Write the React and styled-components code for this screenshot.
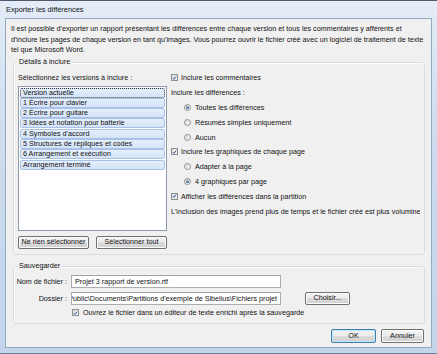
import React from "react";
import styled, { createGlobalStyle, css } from "styled-components";

const GlobalStyle = createGlobalStyle`
  html, body {
    margin: 0;
    padding: 0;
    background: #fff;
  }
  body {
    font-family: "Liberation Sans", Arial, sans-serif;
    font-size: 7.2px;
    color: #111;
  }
`;

const Frame = styled.div`
  width: 437px;
  height: 354px;
  box-sizing: border-box;
  display: flex;
  flex-direction: column;
  padding: 0 5px 5px 5px;
  background: linear-gradient(180deg, #e3ecf7 0%, #cddcee 40%, #c3d5eb 100%);
  border-top: 1px solid #4d5b6c;
  border-bottom: 1px solid #6d7f95;
`;

const TitleBar = styled.div`
  height: 17px;
  display: flex;
  align-items: center;
  padding-left: 1px;
  font-size: 7.4px;
  color: #111;
`;

const Client = styled.div`
  flex: 1;
  display: flex;
  flex-direction: column;
  background: #f0f0f0;
  border: 1px solid #93a8c2;
  box-sizing: border-box;
`;

const Intro = styled.p`
  margin: 0;
  padding: 5px 0 0 5px;
  line-height: 10.5px;
  white-space: nowrap;
`;

const Group = styled.div`
  position: relative;
  margin: ${({ $top }) => $top}px 6px 0 7px;
  height: ${({ $h }) => $h}px;
  box-sizing: border-box;
  border: 1px solid #d5dfe5;
  border-radius: 3px;
  box-shadow: inset 1px 1px 0 #fff;
  padding: ${({ $pad }) => $pad};
`;

const Legend = styled.span`
  position: absolute;
  top: -6px;
  left: 3px;
  padding: 0 2px;
  background: #f0f0f0;
  line-height: 10px;
`;

const Columns = styled.div`
  display: flex;
  gap: 4px;
  height: 100%;
`;

const LeftCol = styled.div`
  width: 149px;
  flex: none;
  display: flex;
  flex-direction: column;
  padding-top: 3px;
`;

const Caption = styled.div`
  line-height: 10px;
  height: 10px;
  margin-bottom: 3px;
`;

const ListBox = styled.div`
  height: 146px;
  box-sizing: border-box;
  background: #fff;
  border: 1px solid #8e9aa8;
  padding: 1px;
  display: flex;
  flex-direction: column;
  gap: 0.3px;
`;

const ListItem = styled.div`
  height: 10px;
  box-sizing: border-box;
  line-height: 8px;
  padding-left: 2px;
  border-radius: 2px;
  white-space: nowrap;
  background: linear-gradient(180deg, #e6effb 0%, #d3e3f7 100%);
  border: 1px solid #a7c2e6;
  ${({ $focus }) =>
    $focus &&
    css`
      border: 1px dotted #30343a;
    `}
`;

const ButtonRow = styled.div`
  display: flex;
  justify-content: space-between;
  margin-top: 5px;
`;

const Button = styled.button`
  font: inherit;
  color: #111;
  height: ${({ $h }) => $h || 13}px;
  width: ${({ $w }) => $w}px;
  margin-left: ${({ $ml }) => $ml || 0}px;
  padding: 0;
  flex: none;
  box-sizing: border-box;
  border: 1px solid ${({ $default }) => ($default ? "#3c7fb1" : "#707070")};
  border-radius: 2px;
  background: linear-gradient(180deg, #f3f3f3 0%, #ebebeb 49%, #dddddd 50%, #cfcfcf 100%);
  box-shadow: inset 0 0 0 1px ${({ $default }) => ($default ? "#c4e5f6" : "#fcfcfc")};
  line-height: 1;
`;

const RightCol = styled.div`
  flex: 1;
  min-width: 0;
  overflow: hidden;
  display: flex;
  flex-direction: column;
  padding-top: 1px;
`;

const Row = styled.div`
  height: 14.8px;
  display: flex;
  align-items: center;
  gap: ${({ $indent }) => ($indent ? 4 : 3)}px;
  padding-left: ${({ $indent }) => ($indent ? 13 : 0)}px;
  white-space: nowrap;
`;

const Box = styled.span`
  width: 7px;
  height: 7px;
  box-sizing: border-box;
  border: 1px solid #8e8f8f;
  background: linear-gradient(135deg, #dcdcdc 0%, #f6f6f6 100%);
  display: inline-flex;
  align-items: center;
  justify-content: center;
  flex: none;
`;

const Dot = styled(Box)`
  border-radius: 50%;
`;

const DotFill = styled.span`
  width: 3px;
  height: 3px;
  border-radius: 50%;
  background: radial-gradient(circle at 40% 35%, #8ab4dd 0%, #1d4f82 80%);
`;

const Check = () => (
  <Box>
    <svg width="6" height="6" viewBox="0 0 6 6">
      <path d="M1 3.2 L2.4 4.6 L5 1.2" fill="none" stroke="#2b4a86" strokeWidth="1.1" />
    </svg>
  </Box>
);

const Radio = ({ on }) => <Dot>{on && <DotFill />}</Dot>;

const FieldRow = styled.div`
  display: flex;
  align-items: center;
  height: ${({ $h }) => $h}px;
  margin-bottom: ${({ $mb }) => $mb || 0}px;
  white-space: nowrap;
`;

const FieldLabel = styled.span`
  width: 53px;
  text-align: right;
  margin-right: 4px;
  flex: none;
`;

const TextInput = styled.div`
  width: 210px;
  height: 13px;
  flex: none;
  box-sizing: border-box;
  background: #fff;
  border: 1px solid #abadb3;
  border-top-color: #a0a3aa;
  display: flex;
  align-items: center;
  justify-content: ${({ $end }) => ($end ? "flex-end" : "flex-start")};
  overflow: hidden;
  padding: 0 3px;
  white-space: nowrap;
`;

const CheckLine = styled.div`
  display: flex;
  align-items: center;
  gap: 4px;
  padding-left: 58px;
  height: 10px;
  white-space: nowrap;
`;

const Footer = styled.div`
  display: flex;
  justify-content: flex-end;
  gap: 5px;
  padding: 5px 7px 0 0;
`;

const versions = [
  "Version actuelle",
  "1 Écrire pour clavier",
  "2 Écrire pour guitare",
  "3 Idées et notation pour batterie",
  "4 Symboles d'accord",
  "5 Structures de répliques et codes",
  "6 Arrangement et exécution",
  "Arrangement terminé",
];

export default function App() {
  return (
    <>
      <GlobalStyle />
      <Frame>
        <TitleBar>Exporter les différences</TitleBar>
        <Client>
          <Intro>
            Il est possible d'exporter un rapport présentant les différences entre chaque version et tous les commentaires y afférents et
            <br />
            d'inclure les pages de chaque version en tant qu'images. Vous pourrez ouvrir le fichier créé avec un logiciel de traitement de texte
            <br />
            tel que Microsoft Word.
          </Intro>

          <Group $top={6} $h={193} $pad="7px 4px 5px 4px">
            <Legend>Détails à inclure</Legend>
            <Columns>
              <LeftCol>
                <Caption>Sélectionnez les versions à inclure :</Caption>
                <ListBox>
                  {versions.map((v, i) => (
                    <ListItem key={v} $focus={i === 0}>
                      {v}
                    </ListItem>
                  ))}
                </ListBox>
                <ButtonRow>
                  <Button $w={71}>Ne rien sélectionner</Button>
                  <Button $w={71}>Sélectionner tout</Button>
                </ButtonRow>
              </LeftCol>
              <RightCol>
                <Row>
                  <Check />
                  Inclure les commentaires
                </Row>
                <Row>Inclure les différences :</Row>
                <Row $indent>
                  <Radio on />
                  Toutes les différences
                </Row>
                <Row $indent>
                  <Radio />
                  Résumés simples uniquement
                </Row>
                <Row $indent>
                  <Radio />
                  Aucun
                </Row>
                <Row>
                  <Check />
                  Inclure les graphiques de chaque page
                </Row>
                <Row $indent>
                  <Radio />
                  Adapter à la page
                </Row>
                <Row $indent>
                  <Radio on />
                  4 graphiques par page
                </Row>
                <Row>
                  <Check />
                  Afficher les différences dans la partition
                </Row>
                <Row>L'inclusion des images prend plus de temps et le fichier créé est plus volumineux.</Row>
              </RightCol>
            </Columns>
          </Group>

          <Group $top={11} $h={58} $pad="8px 0 0 0">
            <Legend>Sauvegarder</Legend>
            <FieldRow $h={13} $mb={4}>
              <FieldLabel>Nom de fichier :</FieldLabel>
              <TextInput>Projet 3 rapport de version.rtf</TextInput>
            </FieldRow>
            <FieldRow $h={13} $mb={3}>
              <FieldLabel>Dossier :</FieldLabel>
              <TextInput $end>Public\Documents\Partitions d'exemple de Sibelius\Fichiers projet</TextInput>
              <Button $w={45} $ml={24}>
                Choisir...
              </Button>
            </FieldRow>
            <CheckLine>
              <Check />
              Ouvrez le fichier dans un éditeur de texte enrichi après la sauvegarde
            </CheckLine>
          </Group>

          <Footer>
            <Button $w={45} $h={14} $default>
              OK
            </Button>
            <Button $w={43} $h={14}>
              Annuler
            </Button>
          </Footer>
        </Client>
      </Frame>
    </>
  );
}
